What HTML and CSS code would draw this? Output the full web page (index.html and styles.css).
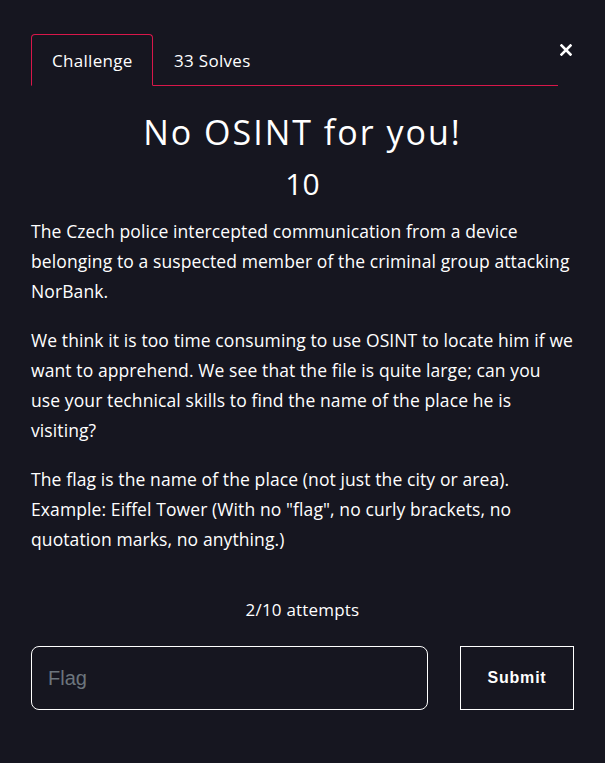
FILE: index.html
```html
<!DOCTYPE html>
<html lang="en">
<head>
<meta charset="utf-8">
<title>No OSINT for you!</title>
<link rel="stylesheet" href="styles.css">
</head>
<body>
<div class="modal">
  <button class="close" aria-label="Close"><svg width="12" height="12" viewBox="0 0 12 12"><path d="M1.5 1.5 L10.5 10.5 M10.5 1.5 L1.5 10.5" stroke="#fff" stroke-width="2.6" stroke-linecap="square"/></svg></button>
  <div class="tabs">
    <div class="tab active">Challenge</div>
    <div class="tab">33 Solves</div>
  </div>
  <h1 class="title">No OSINT for you!</h1>
  <div class="value">10</div>
  <div class="desc">
    <p>The Czech police intercepted communication from a device belonging to a suspected member of the criminal group attacking NorBank.</p>
    <p>We think it is too time consuming to use OSINT to locate him if we want to apprehend. We see that the file is quite large; can you use your technical skills to find the name of the place he is visiting?</p>
    <p>The flag is the name of the place (not just the city or area). Example: Eiffel Tower (With no "flag", no curly brackets, no quotation marks, no anything.)</p>
  </div>
  <div class="attempts">2/10 attempts</div>
  <form class="submit-row">
    <input class="flag" type="text" placeholder="Flag">
    <button class="submit" type="button">Submit</button>
  </form>
</div>
</body>
</html>
```
FILE: styles.css
```css
html, body {
  margin: 0;
  padding: 0;
  background: #161620;
  color: #ffffff;
  font-family: "Open Sans", "Noto Sans", sans-serif;
}
.modal {
  position: relative;
  padding: 34px 31px 0 31px;
  width: 543px;
}
.close {
  position: absolute;
  top: 44px;
  right: 33px;
  background: none;
  border: none;
  padding: 0;
  line-height: 0;
}
.tabs {
  display: flex;
  width: 527px;
  border-bottom: 1px solid #d8174a;
}
.tab {
  font-size: 17px;
  height: 50px;
  line-height: 51px;
  padding: 0 20px;
  margin-bottom: -1px;
  border: 1px solid transparent;
  border-radius: 4px 4px 0 0;
  letter-spacing: 0.3px;
}
.tab.active {
  border-color: #d8174a;
  border-bottom-color: #161620;
  width: 80px;
  text-align: center;
}
.title {
  margin: 24px 0 0;
  text-align: center;
  font-weight: 400;
  font-size: 34px;
  letter-spacing: 2px;
  line-height: 44px;
}
.value {
  text-align: center;
  font-size: 30px;
  line-height: 36px;
  margin-top: 12px;
}
.desc {
  margin-top: 14px;
  font-size: 17.5px;
  line-height: 30px;
  letter-spacing: 0.1px;
}
.desc p {
  margin: 0 0 19px;
}
.attempts {
  text-align: center;
  font-size: 17px;
  line-height: 24px;
  margin-top: 44px;
  letter-spacing: 0.2px;
}
.submit-row {
  display: flex;
  gap: 32px;
  margin-top: 24px;
}
.flag {
  box-sizing: border-box;
  width: 397px;
  height: 64px;
  background: transparent;
  border: 1px solid #ffffff;
  border-radius: 8px;
  padding: 0 16px;
  color: #fff;
  font-family: "Liberation Sans", Arial, sans-serif;
  font-size: 20px;
  outline: none;
}
.flag::placeholder {
  color: #6c757d;
}
.submit {
  box-sizing: border-box;
  width: 114px;
  height: 64px;
  background: transparent;
  border: 1px solid #ffffff;
  border-radius: 0;
  color: #fff;
  font-family: "Liberation Sans", Arial, sans-serif;
  font-weight: bold;
  font-size: 16px;
  letter-spacing: 0.8px;
}
```
